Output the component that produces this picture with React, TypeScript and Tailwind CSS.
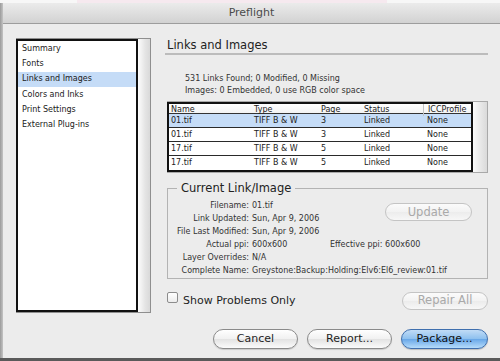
const SIDEBAR_ITEMS = [
  "Summary",
  "Fonts",
  "Links and Images",
  "Colors and Inks",
  "Print Settings",
  "External Plug-ins",
];

const LINKS = [
  { name: "01.tif", type: "TIFF B & W", page: "3", status: "Linked", icc: "None", selected: true },
  { name: "01.tif", type: "TIFF B & W", page: "3", status: "Linked", icc: "None" },
  { name: "17.tif", type: "TIFF B & W", page: "5", status: "Linked", icc: "None" },
  { name: "17.tif", type: "TIFF B & W", page: "5", status: "Linked", icc: "None" },
];

const AQUA =
  "flex items-center justify-center rounded-full border border-[#8a8a8a] bg-[linear-gradient(#ffffff,#f1f1f1_48%,#e3e3e3_52%,#fbfbfb)] text-[11px] text-[#1e1e1e] shadow-[0_1px_1px_rgba(0,0,0,0.15)]";
const AQUA_DISABLED =
  "flex items-center justify-center rounded-full border border-[#c4c4c4] bg-[linear-gradient(#fbfbfb,#f2f2f2_50%,#ececec_52%,#f7f7f7)] text-[11.5px] text-[#a9a9a9]";

function Sidebar() {
  return (
    <div className="flex h-[275px] w-[135px] border-t border-b border-r border-[#8f8f8f]">
      <div className="flex w-[122px] flex-col border-2 border-[#111] bg-white">
        {SIDEBAR_ITEMS.map((item) => (
          <div
            key={item}
            className={
              item === "Links and Images"
                ? "flex h-[15.3px] items-center bg-[#c5dcf7] pl-[4px] text-[8px] text-[#1a1a1a]"
                : "flex h-[15.3px] items-center pl-[4px] text-[8px] text-[#1a1a1a]"
            }
          >
            {item}
          </div>
        ))}
      </div>
      <div className="flex-1 bg-[linear-gradient(90deg,#fdfdfd,#e4e4e4_60%,#d9d9d9)]" />
    </div>
  );
}

function LinksTable() {
  const cols = "grid grid-cols-[81px_67px_43px_63px_1fr]";
  return (
    <div className="ml-[2px] mt-[4px] flex w-[321px] border-t border-b border-r border-[#a9a9a9]">
      <div className="w-[306px] border-2 border-[#111] bg-white text-[8px] text-[#222]">
        <div className={`${cols} h-[10px] items-center border-b border-[#333] bg-[linear-gradient(#ffffff,#f3f3f3)]`}>
          <span className="pl-[2px]">Name</span>
          <span className="pl-[4px]">Type</span>
          <span className="pl-[4px]">Page</span>
          <span className="pl-[4px]">Status</span>
          <span className="border-l border-[#c4c4c4] pl-[4px]">ICCProfile</span>
        </div>
        {LINKS.map((row, i) => (
          <div
            key={i}
            className={`${cols} h-[14px] items-center border-b border-[#2a2a2a] last:border-b-0 ${
              row.selected ? "bg-[#c5dcf7]" : "bg-white"
            }`}
          >
            <span className="pl-[2px]">{row.name}</span>
            <span className="pl-[4px]">{row.type}</span>
            <span className="pl-[4px]">{row.page}</span>
            <span className="pl-[4px]">{row.status}</span>
            <span className="pl-[4px]">{row.icc}</span>
          </div>
        ))}
      </div>
      <div className="flex-1 bg-[linear-gradient(90deg,#fbfbfb,#e6e6e6_60%,#dadada)]" />
    </div>
  );
}

function CurrentLink() {
  const label = "pr-[3px] text-right";
  return (
    <fieldset className="ml-[2px] mt-[8px] w-[321px] border border-[#b3b3b3] pb-[1px]">
      <legend className="ml-[9px] px-[4px] text-[11.5px] leading-[14px] text-[#222]">
        Current Link/Image
      </legend>
      <div className="grid grid-cols-[84px_133px_87px] pt-[4px] text-[8px] leading-[13px] text-[#333]">
        <span className={label}>Filename:</span>
        <span>01.tif</span>
        <div className="row-span-2 self-center">
          <div className={`${AQUA_DISABLED} h-[18px] w-[87px]`}>Update</div>
        </div>
        <span className={label}>Link Updated:</span>
        <span>Sun, Apr 9, 2006</span>
        <span className={label}>File Last Modified:</span>
        <span className="col-span-2">Sun, Apr 9, 2006</span>
        <span className={label}>Actual ppi:</span>
        <span className="col-span-2 flex">
          <span className="w-[78px]">600x600</span>
          <span>Effective ppi: 600x600</span>
        </span>
        <span className={label}>Layer Overrides:</span>
        <span className="col-span-2">N/A</span>
        <span className={label}>Complete Name:</span>
        <span className="col-span-2 whitespace-nowrap">Greystone:Backup:Holding:Elv6:El6_review:01.tif</span>
      </div>
    </fieldset>
  );
}

export default function App() {
  return (
    <div className="flex h-[361px] w-[500px] flex-col overflow-hidden bg-[#ececec] font-['DejaVu_Sans',sans-serif]">
      <div className="flex h-[3px] bg-[#f7f7f7]">
        <div className="w-[77px]" />
        <div className="w-[310px] bg-[#f6e9ef]" />
      </div>
      <div className="flex flex-1">
        <div className="w-[3px] bg-[linear-gradient(90deg,#9b9b9b,#c4c4c4)]" />
        <div className="flex flex-1 flex-col">
          <div className="flex h-[21px] items-center justify-center border-b border-[#9d9d9d] bg-[linear-gradient(#ebebeb,#d2d2d2)] text-[11px] text-[#4b4b4b]">
            Preflight
          </div>
          <div className="flex flex-1 pl-[13px] pt-[14px]">
            <Sidebar />
            <div className="ml-[14px] flex w-[323px] flex-col">
              <div className="h-[17px] border-b-2 border-[#bcbcbc] pl-[2px] text-[11.5px] leading-[15px] text-[#222]">
                Links and Images
              </div>
              <div className="mt-[18px] pl-[20px] text-[8px] leading-[12px] text-[#333]">
                <div>531 Links Found; 0 Modified, 0 Missing</div>
                <div>Images: 0 Embedded, 0 use RGB color space</div>
              </div>
              <LinksTable />
              <CurrentLink />
              <div className="ml-[2px] mt-[13px] flex h-[18px] items-stretch justify-between">
                <label className="flex gap-[5px] text-[11px] text-[#1e1e1e]">
                  <span className="h-[11px] w-[11px] self-start rounded-[2px] border border-[#8c8c8c] bg-[linear-gradient(#ffffff,#ececec)]" />
                  <span className="self-center pt-[1px]">Show Problems Only</span>
                </label>
                <div className={`${AQUA_DISABLED} h-[18px] w-[86px]`}>Repair All</div>
              </div>
              <div className="mt-[19px] flex h-[20px] justify-end gap-[9px]">
                <div className={`${AQUA} w-[85px]`}>Cancel</div>
                <div className={`${AQUA} w-[85px]`}>Report...</div>
                <div className="flex w-[87px] items-center justify-center rounded-full border border-[#3f6fae] bg-[linear-gradient(#c1dcf6,#8fc1ef_48%,#6aa8e8_52%,#b6dcfb)] text-[11px] text-[#111] shadow-[0_1px_1px_rgba(0,0,0,0.2)]">
                  Package...
                </div>
              </div>
            </div>
          </div>
        </div>
      </div>
      <div className="h-[3px] bg-[#5a5a5a]" />
    </div>
  );
}
